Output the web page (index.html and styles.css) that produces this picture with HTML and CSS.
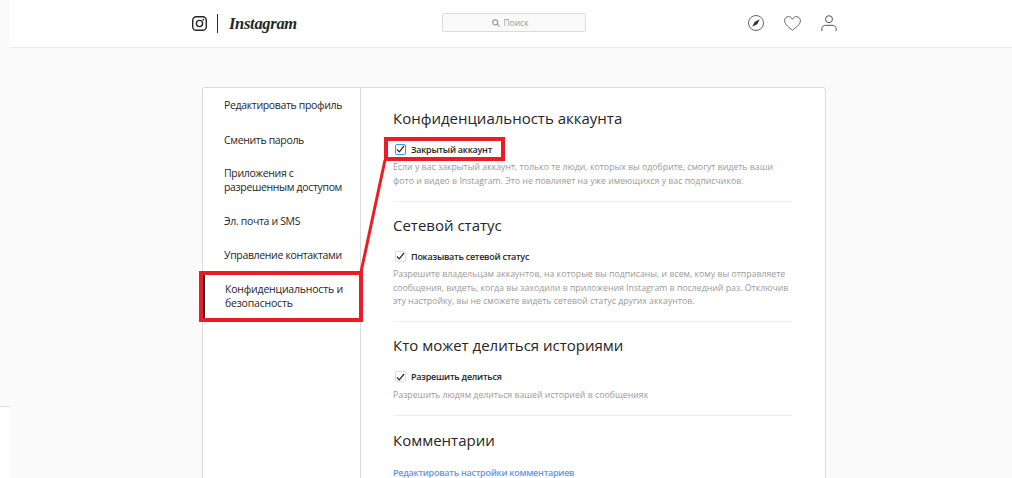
FILE: index.html
```html
<!DOCTYPE html>
<html lang="ru">
<head>
<meta charset="utf-8">
<title>Instagram</title>
<link rel="stylesheet" href="styles.css">
</head>
<body>
<div class="page">
  <header class="topbar">
    <div class="topbar-inner">
      <div class="brand">
        <svg class="glyph" width="15" height="15" viewBox="0 0 15 15" fill="none" stroke="#262626" stroke-width="1.4"><rect x="0.7" y="0.7" width="13.6" height="13.6" rx="3.6"/><circle cx="7.5" cy="7.5" r="3.1"/><circle cx="11.3" cy="3.7" r="0.9" fill="#262626" stroke="none"/></svg>
        <span class="brand-sep"></span>
        <span class="wordmark">Instagram</span>
      </div>
      <div class="search"><svg width="8" height="8" viewBox="0 0 8 8" fill="none" stroke="#999" stroke-width="1.2"><circle cx="3.3" cy="3.3" r="2.5"/><path d="M5.2 5.2 7.6 7.6"/></svg><span>Поиск</span></div>
      <nav class="icons">
        <svg width="16" height="16" viewBox="0 0 16 16" fill="none" stroke="#555" stroke-width="0.9"><circle cx="8" cy="8" r="7.5"/><path d="M11.8 4.2 9.2 9.2 4.2 11.8 6.8 6.8Z" fill="#333" stroke="none"/></svg>
        <svg width="17" height="15" viewBox="0 0 17 15" fill="none" stroke="#555" stroke-width="0.9"><path d="M8.5 14.3C5.500 11.800.6 8.600.6 4.700.6 2.400 2.300.6 4.500.6c1.700 0 3.100 1 4 2.600C9.400 1.600 10.800.6 12.500.6c2.200 0 3.900 1.800 3.900 4.100 0 3.900-4.900 7.100-7.900 9.600Z"/></svg>
        <svg width="16" height="16" viewBox="0 0 16 16" fill="none" stroke="#555" stroke-width="1"><circle cx="8" cy="4.200" r="3.500"/><path d="M.8 16v-2.200C.8 11.400 3 10.300 5 10.300h6c2 0 4.200 1.100 4.200 3.500V16"/></svg>
      </nav>
    </div>
  </header>
  <main class="card">
    <aside class="side">
      <a class="side-item">Редактировать профиль</a>
      <a class="side-item">Сменить пароль</a>
      <a class="side-item">Приложения с разрешенным доступом</a>
      <a class="side-item">Эл. почта и SMS</a>
      <a class="side-item">Управление контактами</a>
      <a class="side-item active">Конфиденциальность и безопасность</a>
    </aside>
    <section class="content">
      <div class="block">
        <h2>Конфиденциальность аккаунта</h2>
        <label class="check"><span class="box focus"><svg width="9" height="8" viewBox="0 0 9 8" fill="none" stroke="#262626" stroke-width="1.200"><path d="M1 4.500 3.300 6.800 8 1"/></svg></span>Закрытый аккаунт</label>
        <p>Если у вас закрытый аккаунт, только те люди, которых вы одобрите, смогут видеть ваши фото и видео в Instagram. Это не повлияет на уже имеющихся у вас подписчиков.</p>
      </div>
      <div class="block">
        <h2>Сетевой статус</h2>
        <label class="check"><span class="box"><svg width="9" height="8" viewBox="0 0 9 8" fill="none" stroke="#262626" stroke-width="1.200"><path d="M1 4.500 3.300 6.800 8 1"/></svg></span>Показывать сетевой статус</label>
        <p>Разрешите владельцам аккаунтов, на которые вы подписаны, и всем, кому вы отправляете сообщения, видеть, когда вы заходили в приложения Instagram в последний раз. Отключив эту настройку, вы не сможете видеть сетевой статус других аккаунтов.</p>
      </div>
      <div class="block">
        <h2>Кто может делиться историями</h2>
        <label class="check"><span class="box"><svg width="9" height="8" viewBox="0 0 9 8" fill="none" stroke="#262626" stroke-width="1.200"><path d="M1 4.500 3.300 6.800 8 1"/></svg></span>Разрешить делиться</label>
        <p>Разрешить людям делиться вашей историей в сообщениях</p>
      </div>
      <div class="block last">
        <h2>Комментарии</h2>
        <a class="link">Редактировать настройки комментариев</a>
      </div>
    </section>
  </main>
  <div class="strip"></div>
  <svg class="annot" width="1012" height="478" viewBox="0 0 1012 478" fill="none" stroke="#ed1c24" stroke-width="4">
    <rect x="386" y="139" width="117" height="20"/>
    <rect x="201" y="273" width="160" height="47"/>
    <path d="M385 160 361 272" stroke-width="3"/>
  </svg>
</div>
</body>
</html>
```
FILE: styles.css
```css
* { box-sizing: border-box; }
html, body { margin: 0; padding: 0; }
body { width: 1012px; height: 478px; overflow: hidden; background: #fafafa; font-family: "Open Sans", "Noto Sans", sans-serif; color: #262626; }
.page { position: relative; width: 1012px; height: 478px; padding-left: 10px; overflow: hidden; background: #fafafa; }
.topbar { height: 48px; background: #fff; border-bottom: 1px solid #ebebeb; }
.topbar-inner { display: flex; align-items: center; height: 47px; padding-left: 182px; }
.brand { display: flex; align-items: center; width: 250px; }
.brand-sep { width: 1px; height: 19px; background: #262626; margin: 0 11px 0 10px; }
.wordmark { font-family: "Liberation Serif", serif; font-style: italic; font-weight: 700; font-size: 16.5px; letter-spacing: -0.3px; color: #262626; }
.search { display: flex; align-items: center; justify-content: center; gap: 3px; width: 144px; height: 19px; margin-top: -2px; padding-right: 7px; background: #fafafa; border: 1px solid #dbdbdb; border-radius: 2px; font-size: 8.5px; color: #999; }
.icons { display: flex; align-items: center; gap: 20px; margin-left: 162px; margin-top: -1px; }
.card { display: flex; width: 624px; height: 391px; margin: 39px 0 0 192px; background: #fff; border: 1px solid #dbdbdb; border-bottom: 0; border-radius: 3px 3px 0 0; }
.side { width: 158px; flex: none; border-right: 1px solid #dbdbdb; }
.side-item { display: block; padding: 10px 12px 10px 21px; font-size: 10.5px; line-height: 14px; letter-spacing: -0.34px; color: #262626; }
.side-item:first-child { padding-bottom: 11px; }
.side-item:nth-child(2) { padding-bottom: 9px; }
.side-item.active { padding-left: 20px; border-left: 2px solid #262626; font-weight: 500; letter-spacing: -0.2px; }
.content { flex: 1; min-width: 0; padding: 20px 33px 0 32px; }
.block { padding-bottom: 13.2px; margin-bottom: 13px; border-bottom: 1px solid #efefef; }
.block.last { border-bottom: 0; padding-top: 1px; padding-bottom: 0; margin-bottom: 0; }
h2 { margin: 0; font-size: 15px; line-height: 20px; font-weight: 400; color: #262626; }
.check { display: flex; align-items: center; gap: 5px; margin: 14.3px 0 0 2px; height: 14px; font-size: 9px; font-weight: 600; letter-spacing: -0.25px; color: #262626; }
.box { display: flex; align-items: center; justify-content: center; width: 11px; height: 11px; background: #fff; border: 1px solid #dbdbdb; border-radius: 2px; }
.box.focus { border-color: #3897f0; }
p { margin: 5px 0 0; font-size: 8.75px; line-height: 13.3px; color: #999; }
.link { display: block; margin-top: 16px; font-size: 9px; font-weight: 600; letter-spacing: -0.25px; line-height: 14px; color: #5f98ea; }
.strip { position: absolute; left: 0; top: 406px; width: 10px; height: 72px; background: #fff; border-top: 1px solid #dbdbdb; }
.annot { position: absolute; left: 0; top: 0; pointer-events: none; }
```
